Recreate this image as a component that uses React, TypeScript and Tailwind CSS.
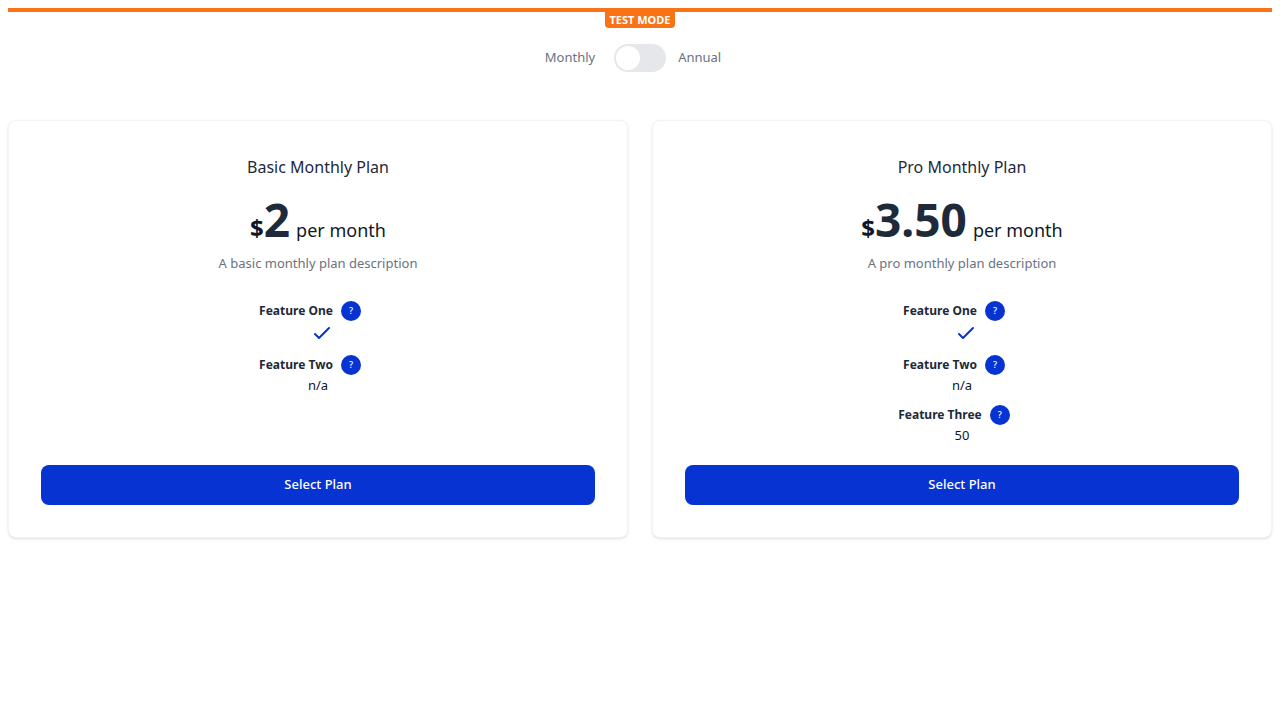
import { useState } from "react";

type Feature = { name: string; value: string | true };
type Plan = { name: string; price: string; description: string; features: Feature[] };

const plans: Plan[] = [
  {
    name: "Basic Monthly Plan",
    price: "2",
    description: "A basic monthly plan description",
    features: [
      { name: "Feature One", value: true },
      { name: "Feature Two", value: "n/a" },
    ],
  },
  {
    name: "Pro Monthly Plan",
    price: "3.50",
    description: "A pro monthly plan description",
    features: [
      { name: "Feature One", value: true },
      { name: "Feature Two", value: "n/a" },
      { name: "Feature Three", value: "50" },
    ],
  },
];

function CheckIcon() {
  return (
    <svg className="ml-2 h-6 w-6 text-[#0633d1]" viewBox="0 0 24 24" fill="none" stroke="currentColor" strokeWidth="2" role="img" aria-label="Included">
      <path strokeLinecap="round" strokeLinejoin="round" d="M5 13l4 4L19 7" />
    </svg>
  );
}

function FeatureItem({ feature }: { feature: Feature }) {
  return (
    <li className="flex flex-col items-center">
      <div className="flex h-5 items-center">
        <span className="text-xs leading-5 font-bold text-gray-800">{feature.name}</span>
        <button type="button" aria-label={"About " + feature.name} className="mr-4 ml-2 flex h-5 w-5 items-center justify-center rounded-full bg-[#0633d1] text-[9px] font-medium text-white">
          ?
        </button>
      </div>
      {feature.value === true ? <CheckIcon /> : <span className="text-[13px] leading-5 text-gray-900">{feature.value}</span>}
    </li>
  );
}

function PlanCard({ plan }: { plan: Plan }) {
  return (
    <section className="flex flex-col rounded-lg border border-gray-100 bg-white p-8 text-center shadow-sm">
      <h2 className="text-base leading-7 text-gray-800">{plan.name}</h2>
      <p className="mt-2 flex items-baseline justify-center text-gray-900">
        <span className="text-2xl font-bold">$</span>
        <span className="text-[46px] leading-[60px] font-bold text-gray-800">{plan.price}</span>
        <span className="ml-[6px] text-lg">per month</span>
      </p>
      <p className="mt-1 text-[13px] leading-5 text-gray-500">{plan.description}</p>
      <ul className="mt-7 flex flex-col gap-[10px]">
        {plan.features.map((f) => (
          <FeatureItem key={f.name} feature={f} />
        ))}
      </ul>
      <div className="mt-auto pt-5">
        <button type="button" className="h-10 w-full rounded-lg bg-[#0633d1] text-[13px] font-medium text-white">
          Select Plan
        </button>
      </div>
    </section>
  );
}

export default function App() {
  const [annual, setAnnual] = useState(false);
  return (
    <main className="p-2 font-['Noto_Sans',sans-serif]">
      <div className="flex justify-center border-t-4 border-[#f97316]">
        <span className="h-4 rounded-b bg-[#f97316] px-1 text-[11px] leading-4 font-bold text-white">TEST MODE</span>
      </div>
      <div className="mt-4 flex items-center justify-center pr-[14px] text-[13px] text-gray-500">
        <span className="mr-[19px]">Monthly</span>
        <label className="flex cursor-pointer">
          <input type="checkbox" role="switch" aria-label="Annual billing" className="peer sr-only" checked={annual} onChange={(e) => setAnnual(e.target.checked)} />
          <span className="flex h-7 w-[52px] rounded-full bg-gray-200 p-[2px] peer-checked:justify-end peer-checked:bg-[#0633d1]">
            <span className="h-6 w-6 rounded-full bg-white" />
          </span>
        </label>
        <span className="ml-3">Annual</span>
      </div>
      <div className="mt-12 grid grid-cols-2 gap-6">
        {plans.map((p) => (
          <PlanCard key={p.name} plan={p} />
        ))}
      </div>
    </main>
  );
}
